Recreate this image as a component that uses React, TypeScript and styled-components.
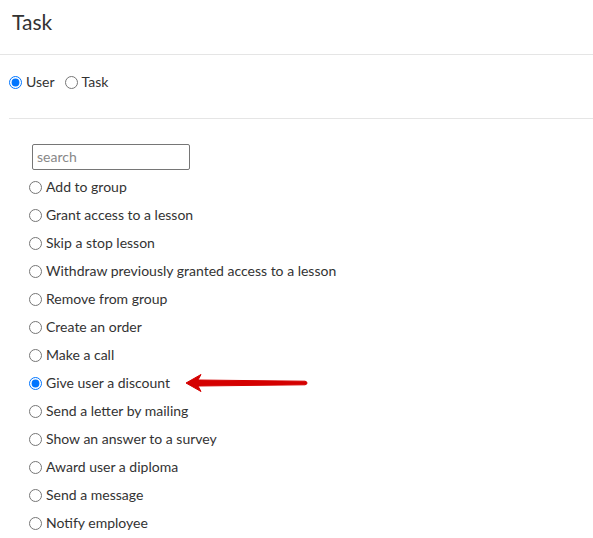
import React, { useState } from "react";
import styled, { createGlobalStyle } from "styled-components";

const Global = createGlobalStyle`
  html, body { margin: 0; padding: 0; background: #fff; }
  body { font-family: Lato, "Open Sans", sans-serif; color: #333; }
`;

const Page = styled.div`
  width: 593px;
`;

const Header = styled.div`
  border-bottom: 1px solid #e5e5e5;
  padding: 9px 0 0 12px;
  box-sizing: border-box;
  height: 55px;
`;

const Title = styled.h1`
  margin: 0;
  font-size: 21px;
  font-weight: 400;
  line-height: 26px;
  color: #333;
`;

const Body = styled.div`
  padding-left: 9px;
`;

const ModeRow = styled.div`
  display: flex;
  align-items: center;
  gap: 10px;
  padding: 18px 0 27px 0;
  border-bottom: 1px solid #e5e5e5;
`;

const Option = styled.label`
  display: flex;
  align-items: center;
  font-size: 14px;
  line-height: 18px;
  color: #333;
  cursor: pointer;
`;

const Radio = styled.input.attrs({ type: "radio" })`
  width: 13px;
  height: 13px;
  margin: 0 4px 0 0;
`;

const List = styled.div`
  padding: 25px 0 0 20px;
  display: flex;
  flex-direction: column;
`;

const Search = styled.input`
  width: 158px;
  height: 26px;
  box-sizing: border-box;
  border: 1px solid #767676;
  border-radius: 2px;
  padding: 0 0 2px 4px;
  font-family: Lato, "Open Sans", sans-serif;
  font-size: 14px;
  color: #333;
  margin: 0 0 3px 3px;
  &::placeholder { color: #888; }
`;

const Item = styled(Option)`
  position: relative;
  height: 28px;
`;

const Arrow = styled.svg`
  position: absolute;
  left: 156px;
  top: 4px;
`;

const tasks = [
  "Add to group",
  "Grant access to a lesson",
  "Skip a stop lesson",
  "Withdraw previously granted access to a lesson",
  "Remove from group",
  "Create an order",
  "Make a call",
  "Give user a discount",
  "Send a letter by mailing",
  "Show an answer to a survey",
  "Award user a diploma",
  "Send a message",
  "Notify employee",
];

export default function App() {
  const [mode, setMode] = useState("user");
  const [task, setTask] = useState("Give user a discount");
  return (
    <Page>
      <Global />
      <Header>
        <Title>Task</Title>
      </Header>
      <Body>
        <ModeRow>
          <Option>
            <Radio name="mode" checked={mode === "user"} onChange={() => setMode("user")} />
            User
          </Option>
          <Option>
            <Radio name="mode" checked={mode === "task"} onChange={() => setMode("task")} />
            Task
          </Option>
        </ModeRow>
        <List>
          <Search placeholder="search" />
          {tasks.map((t) => (
            <Item key={t}>
              <Radio name="task" checked={task === t} onChange={() => setTask(t)} />
              {t}
              {t === "Give user a discount" && (
                <Arrow width="124" height="20" viewBox="0 0 124 20">
                  <path
                    d="M1 10 L16 1.5 L13 7 L120 8.2 Q122 8.5 122 10 Q122 11.5 120 11.8 L13 13 L16 18.5 Z"
                    fill="#d40000"
                    stroke="#d40000"
                    strokeWidth="1"
                    strokeLinejoin="round"
                  />
                </Arrow>
              )}
            </Item>
          ))}
        </List>
      </Body>
    </Page>
  );
}
